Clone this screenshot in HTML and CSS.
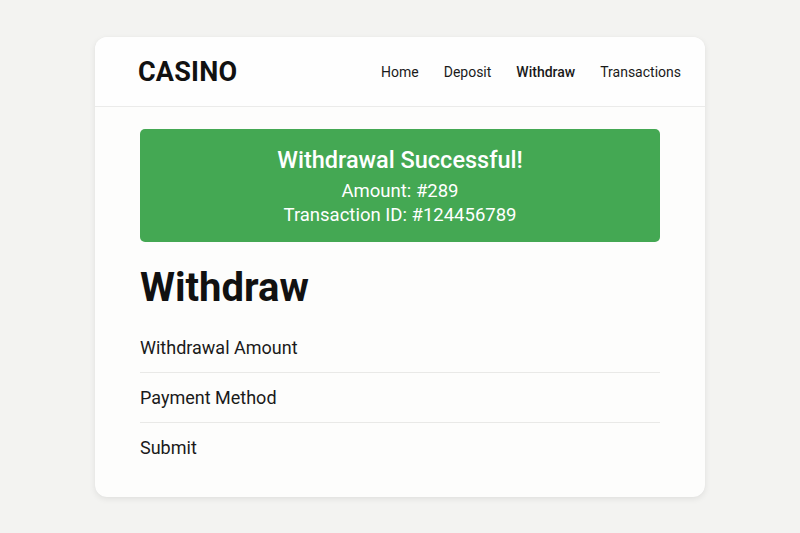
FILE: index.html
```html
<!DOCTYPE html>
<html>
<head>
<meta charset="utf-8">
<link rel="stylesheet" href="styles.css">
</head>
<body>
<div class="card">
  <header class="header">
    <div class="logo">CASINO</div>
    <nav class="nav">
      <a class="nav-link">Home</a>
      <a class="nav-link">Deposit</a>
      <a class="nav-link active">Withdraw</a>
      <a class="nav-link">Transactions</a>
    </nav>
  </header>
  <main class="content">
    <div class="alert">
      <div class="alert-title">Withdrawal Successful!</div>
      <div class="alert-line">Amount: #289</div>
      <div class="alert-line">Transaction ID: #124456789</div>
    </div>
    <h1 class="title">Withdraw</h1>
    <div class="rows">
      <div class="row">Withdrawal Amount</div>
      <div class="row">Payment Method</div>
      <div class="row">Submit</div>
    </div>
  </main>
</div>
</body>
</html>
```

FILE: styles.css
```css
* { box-sizing: border-box; }
html, body { margin: 0; padding: 0; }
body {
  background: #f3f3f1;
  font-family: Roboto, "Noto Sans", sans-serif;
  color: #151515;
  width: 800px;
  height: 533px;
  padding-top: 37px;
}
.card {
  margin-left: 95px;
  width: 610px;
  height: 460px;
  background: #fdfdfc;
  border-radius: 12px;
  box-shadow: 0 2px 6px rgba(0,0,0,0.08), 0 0 1px rgba(0,0,0,0.06);
  overflow: hidden;
}
.header {
  height: 70px;
  display: flex;
  align-items: center;
  justify-content: space-between;
  padding: 0 24px 0 43px;
  border-bottom: 1px solid #ebebea;
  background: #fefefe;
}
.logo {
  font-family: Roboto, "Liberation Sans", sans-serif;
  font-weight: 700;
  font-size: 27px;
  letter-spacing: 0.2px;
  color: #111;
  padding-top: 1px;
}
.nav {
  display: flex;
  gap: 25px;
  font-size: 14px;
  padding-top: 1px;
}
.nav-link { color: #1a1a1a; }
.nav-link.active { font-weight: 500; }
.content {
  padding: 22px 45px 24px 45px;
}
.alert {
  background: #44a853;
  border-radius: 5px;
  color: #fff;
  text-align: center;
  padding: 18px 0 15px;
}
.alert-title {
  font-size: 23.5px;
  font-weight: 500;
  line-height: 26px;
  margin-bottom: 6px;
}
.alert-line {
  font-size: 18.5px;
  line-height: 24px;
}
.title {
  font-size: 40px;
  font-weight: 700;
  line-height: 48px;
  margin: 22px 0 11px;
  color: #111;
}
.row {
  font-size: 18px;
  line-height: 49px;
  border-bottom: 1px solid #e9e9e7;
  color: #1a1a1a;
}
.row:last-child { border-bottom: none; }
```
